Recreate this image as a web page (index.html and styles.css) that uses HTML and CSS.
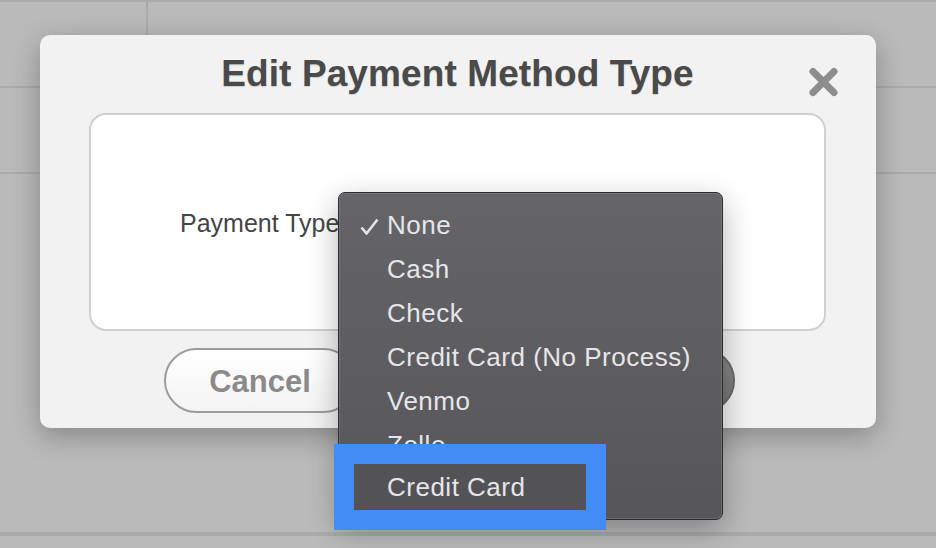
FILE: index.html
```html
<!DOCTYPE html>
<html lang="en">
<head>
	<meta charset="UTF-8">
	<title>Edit Payment Method Type</title>
	<link rel="stylesheet" href="styles.css">
</head>
<body>
	<div class="page">
		<div class="row row-top">
			<div class="cell cell-first"></div>
			<div class="cell"></div>
		</div>
		<div class="row row-mid"></div>
		<div class="row row-big"></div>
		<div class="row row-end"></div>
	</div>

	<div class="modal">
		<h1 class="title">Edit Payment Method Type</h1>
		<svg class="close" width="31" height="30" viewBox="0 0 31 30">
			<path d="M5 4.5 L26 25.5 M26 4.5 L5 25.5" stroke="#8d8d8d" stroke-width="7" stroke-linecap="round" fill="none"/>
		</svg>

		<div class="panel">
			<span class="label">Payment Type</span>
		</div>

		<div class="buttons">
			<button class="btn btn-cancel">Cancel</button>
			<button class="btn btn-save" aria-label="Save"></button>
		</div>

		<!-- popup of the select -->
		<ul class="menu">
			<li class="item">
				<svg class="check" width="19" height="17" viewBox="0 0 19 17">
					<path d="M1.5 9.5 L6.5 15.5 L17.5 1.5" stroke="#e4e4e6" stroke-width="2.6" fill="none"/>
				</svg>
				None
			</li>
			<li class="item">Cash</li>
			<li class="item">Check</li>
			<li class="item">Credit Card (No Process)</li>
			<li class="item">Venmo</li>
			<li class="item">Zolle</li>
			<li class="item picked">Credit Card</li>
		</ul>
	</div>
</body>
</html>
```

FILE: styles.css
```css
html, body {
	margin: 0;
	padding: 0;
}

body {
	width: 936px;
	height: 548px;
	overflow: hidden;
	background: #bababa;
	font-family: "Liberation Sans", Arial, Helvetica, sans-serif;
	position: relative;
}

/* table behind the dialog */
.page {
	display: flex;
	flex-direction: column;
	border-top: 2px solid #aaaaaa;
}

.row {
	border-bottom: 2px solid #aaaaaa;
	display: flex;
}

.row-top {
	height: 84px;
}

.row-mid {
	height: 84px;
}

.row-big {
	height: 358px;
}

.cell-first {
	width: 146px;
	border-right: 2px solid #aaaaaa;
}

/* dialog */
.modal {
	position: absolute;
	left: 40px;
	top: 35px;
	width: 836px;
	height: 393px;
	box-sizing: border-box;
	padding: 20px 50px 0 49px;
	background: #f2f2f2;
	border-radius: 10px;
	box-shadow: 0 8px 28px rgba(0, 0, 0, 0.28);
}

.title {
	margin: 0;
	font-size: 37px;
	line-height: 37px;
	font-weight: bold;
	letter-spacing: 0.1px;
	color: #4a4a4a;
	text-align: center;
	text-shadow: 0 1px 1px rgba(0, 0, 0, 0.15);
}

.close {
	position: absolute;
	right: 37px;
	top: 32px;
}

.panel {
	margin-top: 21px;
	height: 218px;
	box-sizing: border-box;
	background: #ffffff;
	border: 2px solid #d0d0d0;
	border-radius: 17px;
	display: flex;
	align-items: center;
	padding: 3px 0 0 89px;
}

.label {
	font-size: 25px;
	color: #454545;
}

.buttons {
	display: flex;
	gap: 187px;
	margin-top: 17px;
	padding-left: 75px;
}

.btn {
	width: 192px;
	height: 65px;
	border-radius: 33px;
	font-family: "Liberation Sans", Arial, sans-serif;
	font-size: 31px;
	font-weight: bold;
	padding: 3px 0 0 0;
}

.btn-cancel {
	border: 2px solid #9c9c9c;
	background: linear-gradient(#ffffff, #f4f4f4);
	color: #8a8a8a;
}

.btn-save {
	border: 2px solid #6a6a6a;
	background: linear-gradient(#8a8a8a, #747474);
	color: #ffffff;
}

/* select popup */
.menu {
	position: absolute;
	left: 298px;
	top: 157px;
	width: 385px;
	height: 328px;
	box-sizing: border-box;
	margin: 0;
	padding: 10px 0 0 0;
	list-style: none;
	background: linear-gradient(#656569, #56565a);
	border: 1px solid #2c2c2e;
	border-radius: 7px;
	box-shadow: inset 0 0 0 1px rgba(255, 255, 255, 0.12), 0 10px 30px rgba(0, 0, 0, 0.3);
}

.item {
	position: relative;
	height: 44px;
	line-height: 44px;
	padding-left: 48px;
	font-size: 26px;
	letter-spacing: 0.5px;
	color: #e6e6e8;
	white-space: nowrap;
}

.check {
	position: absolute;
	left: 21px;
	top: 15px;
}

.item.picked {
	margin: -3px 0 0 15px;
	width: 232px;
	height: 46px;
	line-height: 46px;
	box-sizing: border-box;
	padding-left: 33px;
	background: #535357;
	outline: 20px solid #418df5;
}
```
